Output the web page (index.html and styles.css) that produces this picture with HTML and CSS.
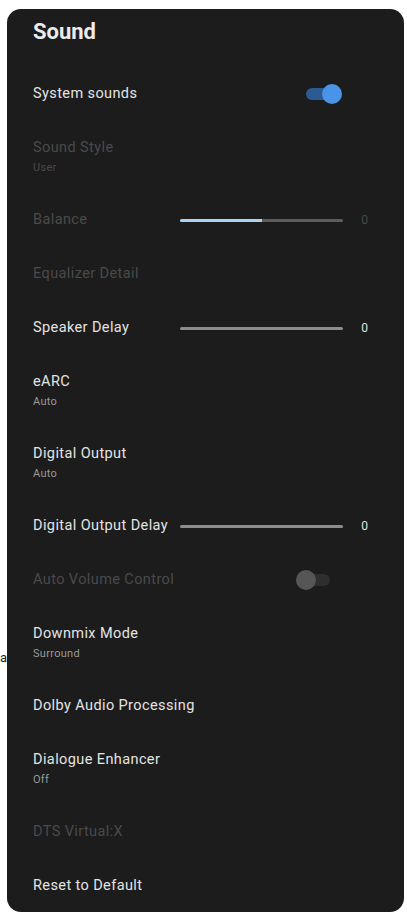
FILE: index.html
```html
<!DOCTYPE html>
<html lang="en">
  <head>
    <meta charset="UTF-8" />
    <meta name="viewport" content="width=device-width, initial-scale=1.0" />
    <title>Sound</title>
    <link rel="stylesheet" href="styles.css">
  </head>
  <body>
    <span class="stray">a</span>
    <div class="panel">
      <h2 class="panel-title">Sound</h2>

      <div class="row">
        <div class="label">System sounds</div>
        <div class="toggle on"><span class="knob"></span></div>
      </div>

      <div class="row disabled">
        <div class="text">
          <div class="label">Sound Style</div>
          <div class="sub">User</div>
        </div>
      </div>

      <div class="row slider-row disabled">
        <div class="label">Balance</div>
        <div class="track"><span class="fill" style="width: 50%"></span></div>
        <div class="value">0</div>
      </div>

      <div class="row disabled">
        <div class="label">Equalizer Detail</div>
      </div>

      <div class="row slider-row">
        <div class="label">Speaker Delay</div>
        <div class="track"></div>
        <div class="value">0</div>
      </div>

      <div class="row">
        <div class="text">
          <div class="label">eARC</div>
          <div class="sub">Auto</div>
        </div>
      </div>

      <div class="row">
        <div class="text">
          <div class="label">Digital Output</div>
          <div class="sub">Auto</div>
        </div>
      </div>

      <div class="row slider-row">
        <div class="label">Digital Output Delay</div>
        <div class="track"></div>
        <div class="value">0</div>
      </div>

      <div class="row disabled">
        <div class="label">Auto Volume Control</div>
        <div class="toggle off"><span class="knob"></span></div>
      </div>

      <div class="row">
        <div class="text">
          <div class="label">Downmix Mode</div>
          <div class="sub">Surround</div>
        </div>
      </div>

      <div class="row">
        <div class="label">Dolby Audio Processing</div>
      </div>

      <div class="row">
        <div class="text">
          <div class="label">Dialogue Enhancer</div>
          <div class="sub">Off</div>
        </div>
      </div>

      <div class="row disabled">
        <div class="label">DTS Virtual:X</div>
      </div>

      <div class="row">
        <div class="label">Reset to Default</div>
      </div>
    </div>
  </body>
</html>
```

FILE: styles.css
```css
body {
  font-family: Roboto, "Liberation Sans", sans-serif;
  margin: 0;
  background-color: white;
  position: relative;
}
.stray {
  position: absolute;
  left: 0;
  top: 650px;
  font-size: 13px;
  color: #222;
}
.panel {
  width: 397px;
  height: 903px;
  margin: 9px 0 0 7px;
  box-sizing: border-box;
  padding: 11px 36px 0 26px;
  border-radius: 14px;
  background-color: #1c1c1c;
  color: #e4e4e4;
  overflow: hidden;
}
.panel-title {
  margin: 0 0 23px;
  font-size: 22px;
  line-height: 24px;
  font-weight: bold;
  color: #ececec;
}
.row {
  display: flex;
  align-items: flex-start;
  padding: 17px 0;
}
.label {
  font-size: 14.5px;
  line-height: 20px;
  letter-spacing: 0.4px;
}
.sub {
  margin-top: 2px;
  font-size: 11px;
  line-height: 16px;
  letter-spacing: 0.3px;
  color: #9a9a9a;
}
.disabled .label,
.disabled .sub,
.disabled .value {
  color: #4a4a4a;
}
.slider-row .label {
  width: 147px;
  flex-shrink: 0;
  white-space: nowrap;
  overflow: visible;
}
.track {
  width: 165px;
  height: 3px;
  margin-top: 9px;
  border-radius: 2px;
  background-color: #8c8c8c;
  overflow: hidden;
}
.disabled .track {
  background-color: #5c5c5c;
}
.fill {
  display: block;
  height: 100%;
  background-color: #a9d3f0;
}
.value {
  margin-left: 18px;
  font-size: 12px;
  line-height: 20px;
}
.toggle {
  position: relative;
  margin-left: auto;
  width: 32px;
  height: 12px;
  margin-top: 4px;
  border-radius: 6px;
}
.toggle.on {
  margin-right: 30px;
  background-color: #2c5a92;
}
.toggle.off {
  margin-right: 38px;
  background-color: #2e2e2e;
}
.knob {
  position: absolute;
  top: -4px;
  width: 20px;
  height: 20px;
  border-radius: 50%;
}
.on .knob {
  right: -4px;
  background-color: #4b93e6;
}
.off .knob {
  left: -2px;
  background-color: #565656;
}
```
